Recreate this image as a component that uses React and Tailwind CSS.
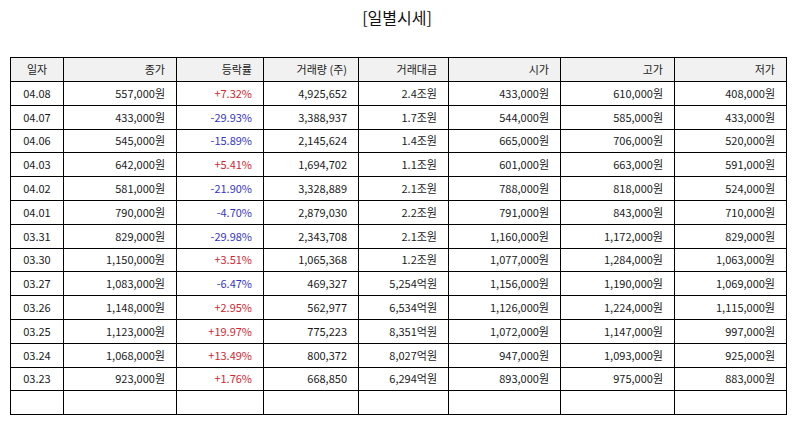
const rows = [
  ['04.08', '557,000원', '+7.32%', '4,925,652', '2.4조원', '433,000원', '610,000원', '408,000원'],
  ['04.07', '433,000원', '-29.93%', '3,388,937', '1.7조원', '544,000원', '585,000원', '433,000원'],
  ['04.06', '545,000원', '-15.89%', '2,145,624', '1.4조원', '665,000원', '706,000원', '520,000원'],
  ['04.03', '642,000원', '+5.41%', '1,694,702', '1.1조원', '601,000원', '663,000원', '591,000원'],
  ['04.02', '581,000원', '-21.90%', '3,328,889', '2.1조원', '788,000원', '818,000원', '524,000원'],
  ['04.01', '790,000원', '-4.70%', '2,879,030', '2.2조원', '791,000원', '843,000원', '710,000원'],
  ['03.31', '829,000원', '-29.98%', '2,343,708', '2.1조원', '1,160,000원', '1,172,000원', '829,000원'],
  ['03.30', '1,150,000원', '+3.51%', '1,065,368', '1.2조원', '1,077,000원', '1,284,000원', '1,063,000원'],
  ['03.27', '1,083,000원', '-6.47%', '469,327', '5,254억원', '1,156,000원', '1,190,000원', '1,069,000원'],
  ['03.26', '1,148,000원', '+2.95%', '562,977', '6,534억원', '1,126,000원', '1,224,000원', '1,115,000원'],
  ['03.25', '1,123,000원', '+19.97%', '775,223', '8,351억원', '1,072,000원', '1,147,000원', '997,000원'],
  ['03.24', '1,068,000원', '+13.49%', '800,372', '8,027억원', '947,000원', '1,093,000원', '925,000원'],
  ['03.23', '923,000원', '+1.76%', '668,850', '6,294억원', '893,000원', '975,000원', '883,000원'],
];

const headers = ['일자', '종가', '등락률', '거래량 (주)', '거래대금', '시가', '고가', '저가'];
const widths = ['w-[53px]', 'w-[113px]', 'w-[87px]', 'w-[95px]', 'w-[90px]', 'w-[112px]', 'w-[114px]', 'w-[112px]'];

const rateColor = (v) => (v.startsWith('+') ? 'text-[#d3262f]' : 'text-[#3636c6]');

export default function App() {
  return (
    <div
      className="w-[794px] h-[425px] bg-white text-[#1a1a1a] overflow-hidden"
      style={{ fontFamily: '"Noto Sans CJK KR", "Noto Sans", sans-serif' }}
    >
      <h1 className="text-center text-[16px] leading-[20px] pt-[7px] text-[#111]">[일별시세]</h1>
      <div className="pl-[10px] pt-[30px]">
        <table className="border-collapse table-fixed w-[777px] text-[11px] leading-none">
          <colgroup>
            {widths.map((w, i) => (
              <col key={i} className={w} />
            ))}
          </colgroup>
          <thead>
            <tr className="h-[24px] bg-[#f1f1f1]">
              {headers.map((h, i) => (
                <th
                  key={h}
                  className={`border border-black font-normal ${i === 0 ? 'text-center' : 'text-right pr-[11px]'}`}
                >
                  {h}
                </th>
              ))}
            </tr>
          </thead>
          <tbody>
            {rows.map((r) => (
              <tr key={r[0]} className="h-[23.8px]">
                {r.map((c, i) => (
                  <td
                    key={i}
                    className={`border border-black ${i === 0 ? 'text-center' : 'text-right pr-[11px]'} ${i === 2 ? rateColor(c) : ''}`}
                  >
                    {c}
                  </td>
                ))}
              </tr>
            ))}
            <tr className="h-[23.8px]">
              {headers.map((h) => (
                <td key={h} className="border border-black" />
              ))}
            </tr>
          </tbody>
        </table>
      </div>
    </div>
  );
}
